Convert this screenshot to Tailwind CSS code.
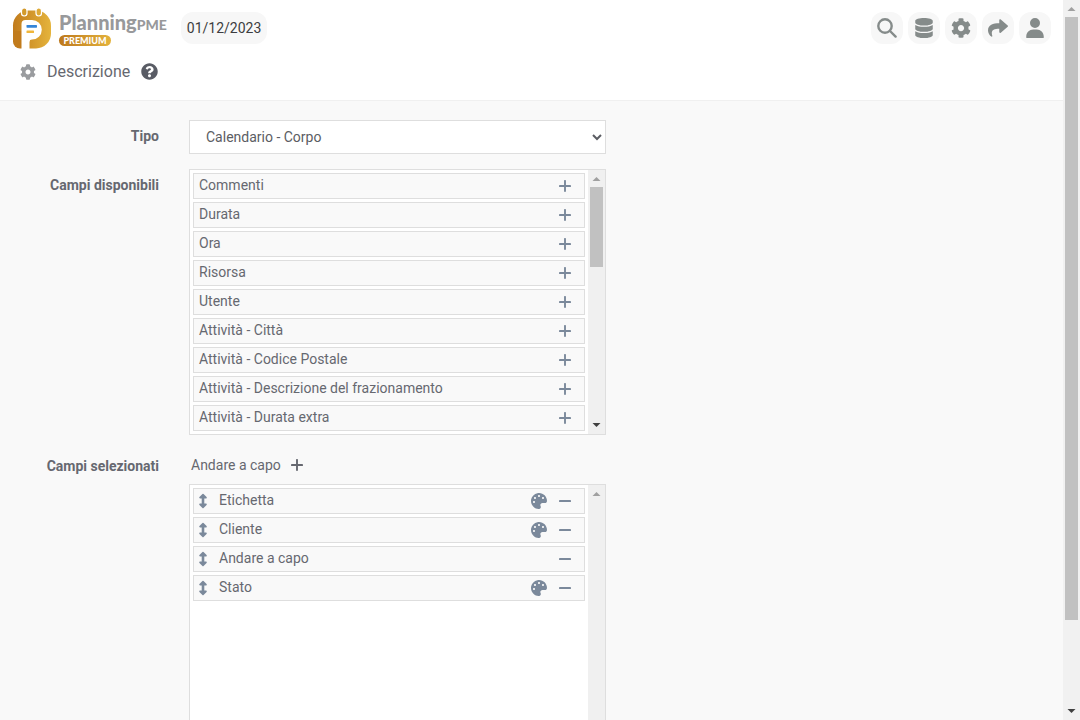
<!DOCTYPE html>
<html lang="it">
<head>
<meta charset="utf-8">
<meta name="viewport" content="width=device-width, initial-scale=1">
<title>PlanningPME - Descrizione</title>
<script src="https://cdn.jsdelivr.net/npm/@tailwindcss/browser@4"></script>
</head>
<body class="flex h-screen overflow-hidden bg-[#f9f9f9] font-[Roboto,sans-serif] text-sm text-[#666870]">
<svg class="hidden">
  <symbol id="cog" viewBox="0 0 512 512"><path d="M487.4 315.7l-42.6-24.6c4.3-23.2 4.3-47 0-70.2l42.6-24.6c4.9-2.8 7.1-8.6 5.5-14-11.1-35.6-30-67.8-54.7-94.6-3.8-4.1-10-5.1-14.8-2.3L380.8 110c-17.9-15.4-38.5-27.3-60.8-35.1V25.8c0-5.6-3.9-10.5-9.4-11.7-36.7-8.2-74.3-7.8-109.2 0-5.5 1.2-9.4 6.1-9.4 11.7V75c-22.2 7.9-42.8 19.8-60.8 35.1L88.7 85.500c-4.9-2.8-11-1.9-14.8 2.3-24.7 26.7-43.6 58.9-54.7 94.6-1.7 5.4.6 11.2 5.5 14L67.3 221c-4.3 23.2-4.3 47 0 70.2l-42.6 24.6c-4.9 2.8-7.1 8.6-5.5 14 11.1 35.6 30 67.8 54.7 94.6 3.8 4.1 10 5.1 14.8 2.3l42.6-24.6c17.9 15.4 38.5 27.3 60.8 35.1v49.2c0 5.6 3.9 10.5 9.4 11.7 36.7 8.2 74.3 7.8 109.2 0 5.5-1.2 9.4-6.1 9.4-11.7v-49.2c22.2-7.9 42.8-19.8 60.8-35.1l42.6 24.6c4.9 2.8 11 1.9 14.8-2.3 24.7-26.7 43.6-58.9 54.7-94.6 1.5-5.5-.7-11.3-5.6-14.1zM256 336c-44.1 0-80-35.9-80-80s35.9-80 80-80 80 35.9 80 80-35.9 80-80 80z"/></symbol>
  <symbol id="palette" viewBox="0 0 512 512"><path d="M204.3 5C104.9 24.4 24.8 104.3 5.2 203.4c-37 187 131.7 326.4 258.8 306.7 41.2-6.4 61.4-54.6 42.5-91.7-23.1-45.4 9.9-98.4 60.9-98.4h79.7c35.8 0 64.8-29.6 64.9-65.3C511.5 97.1 368.1-26.9 204.3 5zM96 320c-17.7 0-32-14.3-32-32s14.3-32 32-32 32 14.3 32 32-14.3 32-32 32zm32-128c-17.7 0-32-14.3-32-32s14.3-32 32-32 32 14.3 32 32-14.3 32-32 32zm128-64c-17.7 0-32-14.3-32-32s14.3-32 32-32 32 14.3 32 32-14.3 32-32 32zm128 64c-17.7 0-32-14.3-32-32s14.3-32 32-32 32 14.3 32 32-14.3 32-32 32z"/></symbol>
  <symbol id="plus" viewBox="0 0 12 12"><path d="M6 .9v10.200M.9 6h10.200" fill="none" stroke="currentColor" stroke-width="1.900" stroke-linecap="round"/></symbol>
  <symbol id="minus" viewBox="0 0 12 12"><path d="M.9 6h10.200" fill="none" stroke="currentColor" stroke-width="1.900" stroke-linecap="round"/></symbol>
  <symbol id="move" viewBox="0 0 10 16"><path d="M5 3v10" stroke="currentColor" stroke-width="2.600"/><path d="M2 4.600L5 1.700l3 2.900zM2 11.400L5 14.300l3-2.900z" fill="currentColor" stroke="currentColor" stroke-width="1.600" stroke-linejoin="round"/></symbol>
</svg>

<div class="flex min-w-0 flex-1 flex-col">
  <header class="h-[101px] shrink-0 border-b border-[#f0f0f0] bg-white">
    <div class="flex h-14 items-center px-3">
      <a href="#" class="flex items-center gap-2" aria-label="PlanningPME Premium">
        <svg class="h-[42px] w-[39px]" viewBox="0 0 39 42">
          <defs>
            <linearGradient id="gold" x1="0" y1="0" x2="1" y2="0"><stop offset="0" stop-color="#c17b1c"/><stop offset="1" stop-color="#e5b43c"/></linearGradient>
          </defs>
          <rect x="1" y="3.500" width="38" height="38" rx="15" fill="url(#gold)"/>
          <path d="M1 24h9v17.500h-2a7 7 0 0 1-7-7z" fill="#c17b1c"/>
          <rect x="9.500" y="1" width="5.500" height="8" rx="2.700" fill="#d39a2b" stroke="#fff" stroke-width="1.200"/>
          <rect x="24" y="1" width="5.500" height="8" rx="2.700" fill="#deaa36" stroke="#fff" stroke-width="1.200"/>
          <path d="M9.500 42V17a4 4 0 0 1 4-4H20a9.800 9.800 0 0 1 0 19.600q-2.500 0-2.500 2.400v7z" fill="#fff"/>
          <rect x="14.500" y="18" width="10.500" height="2.700" rx=".6" fill="#3585d8"/>
          <rect x="14.500" y="23.500" width="7.500" height="2.500" rx=".6" fill="#f0b63a"/>
        </svg>
        <span class="flex flex-col items-start pt-px">
          <span class="font-[Lato,sans-serif] text-xl leading-5 font-black text-[#98999b]">Planning<span class="text-sm leading-5">PME</span></span>
          <span class="flex h-[11px] w-[52px] items-center justify-center rounded-full bg-linear-to-r from-[#bd781c] to-[#e3b23c] font-[Lato,sans-serif] text-[9px] leading-none font-black text-white">PREMIUM</span>
        </span>
      </a>
      <button class="ml-[14px] h-8 rounded-xl bg-[#f7f7f7] px-[6px] text-sm text-[#3c3d40]">01/12/2023</button>
      <nav class="ml-auto flex gap-[5px] text-[#858b8a]" aria-label="Strumenti">
        <button class="flex size-8 items-center justify-center rounded-xl bg-[#f7f7f7]" aria-label="Cerca"><svg class="size-5" viewBox="0 0 20 20" fill="none" stroke="currentColor" stroke-width="2.400" stroke-linecap="round"><circle cx="8" cy="8" r="6.700"/><path d="M13 13l5.600 5.600"/></svg></button>
        <button class="flex size-8 items-center justify-center rounded-xl bg-[#f7f7f7]" aria-label="Dati"><svg class="h-5 w-[18px]" viewBox="0 0 448 512" fill="currentColor"><path d="M448 73.143v45.714C448 159.143 347.667 192 224 192S0 159.143 0 118.857V73.143C0 32.857 100.333 0 224 0s224 32.857 224 73.143zM448 176v102.857C448 319.143 347.667 352 224 352S0 319.143 0 278.857V176c48.125 33.143 136.208 48.572 224 48.572S399.874 209.143 448 176zm0 160v102.857C448 479.143 347.667 512 224 512S0 479.143 0 438.857V336c48.125 33.143 136.208 48.572 224 48.572S399.874 369.143 448 336z"/></svg></button>
        <button class="flex size-8 items-center justify-center rounded-xl bg-[#f7f7f7]" aria-label="Impostazioni"><svg class="size-5" fill="currentColor"><use href="#cog"/></svg></button>
        <button class="flex size-8 items-center justify-center rounded-xl bg-[#f7f7f7]" aria-label="Condividi"><svg class="size-5" viewBox="0 0 512 512" fill="currentColor"><path d="M503.691 189.836L327.687 37.851C312.281 24.546 288 35.347 288 56.015v80.053C127.371 137.907 0 170.1 0 322.326c0 61.441 39.581 122.309 83.333 154.132 13.653 9.931 33.111-2.533 28.077-18.631C66.066 312.814 132.917 274.316 288 272.085V360c0 20.7 24.3 31.453 39.687 18.164l176.004-152c11.071-9.562 11.086-26.753 0-36.328z"/></svg></button>
        <button class="flex size-8 items-center justify-center rounded-xl bg-[#f7f7f7]" aria-label="Utente"><svg class="h-5 w-[18px]" viewBox="0 0 448 512" fill="currentColor"><path d="M224 256A128 128 0 1 0 224 0a128 128 0 1 0 0 256zm-45.7 40C79.800 296 0 375.800 0 474.300V496c0 8.800 7.200 16 16 16h416c8.800 0 16-7.200 16-16v-21.700C448 375.800 368.200 296 269.700 296h-91.400z"/></svg></button>
      </nav>
    </div>
    <div class="flex h-[31px] items-center pl-5">
      <svg class="size-4 text-[#9a9c9f]" fill="currentColor"><use href="#cog"/></svg>
      <h1 class="ml-[11px] text-base">Descrizione</h1>
      <button class="ml-[11px]" aria-label="Aiuto"><svg class="size-[17px] text-[#595c65]" viewBox="0 0 512 512" fill="currentColor"><path d="M504 256c0 136.997-111.043 248-248 248S8 392.997 8 256C8 119.083 119.043 8 256 8s248 111.083 248 248zM262.655 90c-54.497 0-89.255 22.957-116.549 63.758-3.536 5.286-2.353 12.415 2.715 16.258l34.699 26.310c5.205 3.947 12.621 3.008 16.665-2.122 17.864-22.658 30.113-35.797 57.303-35.797 20.429 0 45.698 13.148 45.698 32.958 0 14.976-12.363 22.667-32.534 33.976C247.128 238.528 216 254.941 216 296v4c0 6.627 5.373 12 12 12h56c6.627 0 12-5.373 12-12v-1.333c0-28.462 83.186-29.647 83.186-106.667 0-58.002-60.165-102-116.531-102zM256 338c-25.365 0-46 20.635-46 46 0 25.364 20.635 46 46 46s46-20.636 46-46c0-25.365-20.635-46-46-46z"/></svg></button>
    </div>
  </header>

  <main class="grid min-h-0 flex-1 grid-cols-[159px_minmax(0,417px)] content-start gap-x-[30px] overflow-hidden pt-[19px]">
    <label for="tipo" class="pt-[6px] text-right font-bold">Tipo</label>
    <select id="tipo" class="h-[34px] w-full rounded-none border border-[#dedede] bg-white pl-3 text-[#5b5d63]"><option>Calendario - Corpo</option></select>

    <h2 class="mt-[15px] pt-[6px] text-right font-bold" id="disponibili">Campi disponibili</h2>
    <div class="mt-[15px] flex h-[266px] justify-between border border-[#dedede] bg-white">
      <ul class="flex flex-1 flex-col gap-[3px] overflow-hidden p-[3px]" aria-labelledby="disponibili" id="available"></ul>
      <div class="flex w-[17px] flex-col items-center bg-[#f0f0f0]">
        <svg class="h-[17px] w-[17px] shrink-0" viewBox="0 0 17 17" fill="#a0a0a0"><path d="M4.500 11L8.500 7l4 4z"/></svg>
        <div class="h-20 w-[13px] bg-[#c1c1c1]"></div>
        <svg class="mt-auto h-[17px] w-[17px] shrink-0" viewBox="0 0 17 17" fill="#404040"><path d="M4.500 6h8l-4 4z"/></svg>
      </div>
    </div>

    <h2 class="mt-5 pt-[1px] text-right font-bold" id="selezionati">Campi selezionati</h2>
    <div class="mt-5 flex h-[29px] items-start pl-[2px]">
      <button class="flex items-center gap-[10px]">Andare a capo <svg class="size-3"><use href="#plus"/></svg></button>
    </div>

    <div class="col-start-2 flex h-[266px] justify-between border border-[#dedede] bg-white">
      <ul class="flex flex-1 flex-col gap-[3px] overflow-hidden p-[3px]" aria-labelledby="selezionati" id="selected"></ul>
      <div class="w-[17px] bg-[#f0f0f0]">
        <svg class="h-[17px] w-[17px]" viewBox="0 0 17 17" fill="#a0a0a0"><path d="M4.500 11L8.500 7l4 4z"/></svg>
      </div>
    </div>
  </main>
</div>

<div class="flex w-[17px] shrink-0 flex-col items-center bg-[#f1f1f1]">
  <svg class="h-[17px] w-[17px] shrink-0" viewBox="0 0 17 17" fill="#a0a0a0"><path d="M4.500 11L8.500 7l4 4z"/></svg>
  <div class="h-[603px] w-[13px] bg-[#c1c1c1]"></div>
  <svg class="mt-auto h-[17px] w-[17px] shrink-0" viewBox="0 0 17 17" fill="#404040"><path d="M4.500 6h8l-4 4z"/></svg>
</div>

<template id="available-row">
  <li class="flex h-[26px] shrink-0 items-center border border-[#dedede] bg-[#f9f9f9] pr-[13px] pl-[5px]">
    <span class="flex-1 pb-[2px]"></span>
    <button class="text-[#7b899b]" aria-label="Aggiungi"><svg class="size-3"><use href="#plus"/></svg></button>
  </li>
</template>
<template id="selected-row">
  <li class="flex h-[26px] shrink-0 items-center border border-[#dedede] bg-[#f9f9f9] pr-[13px] pl-1">
    <button class="text-[#7b899b]" aria-label="Sposta"><svg class="h-4 w-[10px]"><use href="#move"/></svg></button>
    <span class="flex-1 pb-[2px] pl-[11px]"></span>
    <button class="mr-3 text-[#7b899b]" data-color aria-label="Colore"><svg class="size-4" fill="currentColor"><use href="#palette"/></svg></button>
    <button class="text-[#7b899b]" aria-label="Rimuovi"><svg class="size-3"><use href="#minus"/></svg></button>
  </li>
</template>
<script>
  function addRow(list, template, text) {
    const row = document.getElementById(template).content.firstElementChild.cloneNode(true);
    row.querySelector('span').textContent = text;
    document.getElementById(list).append(row);
    return row;
  }
  ['Commenti', 'Durata', 'Ora', 'Risorsa', 'Utente', 'Attività - Città', 'Attività - Codice Postale',
   'Attività - Descrizione del frazionamento', 'Attività - Durata extra']
    .forEach(text => addRow('available', 'available-row', text));
  [['Etichetta', true], ['Cliente', true], ['Andare a capo', false], ['Stato', true]].forEach(([text, color]) => {
    const row = addRow('selected', 'selected-row', text);
    if (!color) row.querySelector('[data-color]').remove();
  });
</script>
</body>
</html>
